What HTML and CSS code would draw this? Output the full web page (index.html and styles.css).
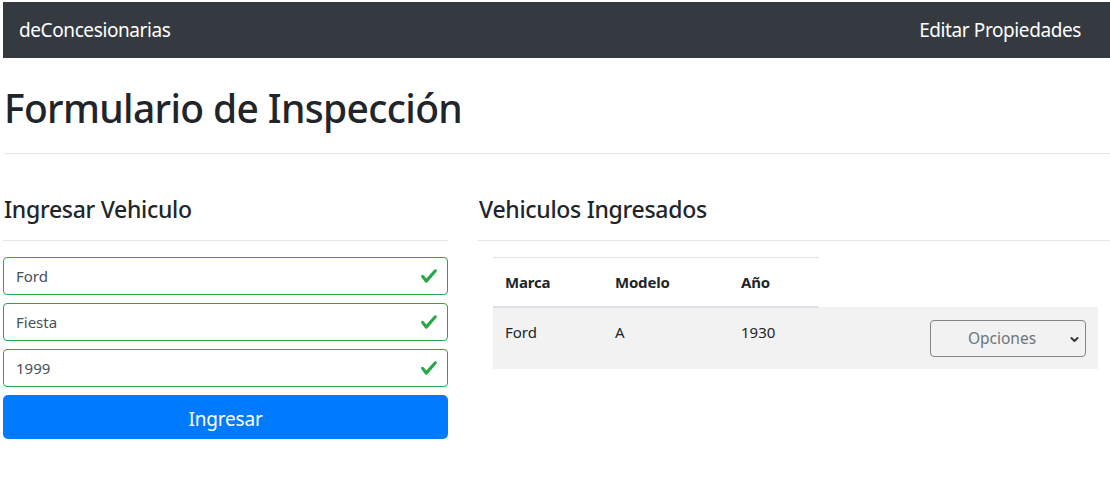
FILE: index.html
```html
<!DOCTYPE html>
<html lang="es">
<head>
<meta charset="utf-8">
<title>Formulario de Inspección</title>
<link rel="stylesheet" href="styles.css">
</head>
<body>
<div class="page">
  <nav class="navbar">
    <a class="brand" href="#">deConcesionarias</a>
    <a class="nav-link" href="#">Editar Propiedades</a>
  </nav>
  <main class="content">
    <h1 class="title">Formulario de Inspección</h1>
    <hr class="rule">
    <div class="columns">
      <section class="col-left">
        <h4 class="section-title">Ingresar Vehiculo</h4>
        <hr class="rule rule-section">
        <form class="form">
          <div class="field">
            <input class="input" type="text" value="Ford">
            <svg class="check" viewBox="0 0 8 8"><path fill="#28a745" d="M2.3 6.73L.6 4.53c-.4-1.04.46-1.4 1.1-.8l1.1 1.4 3.4-3.8c.6-.63 1.6-.27 1.2.7l-4 4.6c-.43.5-.8.4-1.1.1z"/></svg>
          </div>
          <div class="field">
            <input class="input" type="text" value="Fiesta">
            <svg class="check" viewBox="0 0 8 8"><path fill="#28a745" d="M2.3 6.73L.6 4.53c-.4-1.04.46-1.4 1.1-.8l1.1 1.4 3.4-3.8c.6-.63 1.6-.27 1.2.7l-4 4.6c-.43.5-.8.4-1.1.1z"/></svg>
          </div>
          <div class="field">
            <input class="input" type="text" value="1999">
            <svg class="check" viewBox="0 0 8 8"><path fill="#28a745" d="M2.3 6.73L.6 4.53c-.4-1.04.46-1.4 1.1-.8l1.1 1.4 3.4-3.8c.6-.63 1.6-.27 1.2.7l-4 4.6c-.43.5-.8.4-1.1.1z"/></svg>
          </div>
          <button class="btn" type="button">Ingresar</button>
        </form>
      </section>
      <section class="col-right">
        <h4 class="section-title">Vehiculos Ingresados</h4>
        <hr class="rule rule-section">
        <table class="table">
          <thead>
            <tr>
              <th class="c1">Marca</th>
              <th class="c2">Modelo</th>
              <th class="c3">Año</th>
            </tr>
          </thead>
          <tbody>
            <tr class="striped">
              <td>Ford</td>
              <td>A</td>
              <td>1930</td>
              <td class="c4">
                <div class="select">
                  <span>Opciones</span>
                  <svg class="chev" viewBox="0 0 4 5"><path fill="none" stroke="#343a40" stroke-width="0.9" stroke-linecap="round" stroke-linejoin="round" d="M0.6 1.8L2 3.2 3.4 1.8"/></svg>
                </div>
              </td>
            </tr>
          </tbody>
        </table>
      </section>
    </div>
  </main>
</div>
</body>
</html>
```

FILE: styles.css
```css
* { box-sizing: border-box; }

body {
  margin: 0;
  background: #fff;
  font-family: "Noto Sans", "Open Sans", sans-serif;
  color: #212529;
  font-size: 16px;
  line-height: 1.5;
}

.page {
  padding: 2px 0 0 3px;
}

.navbar {
  height: 56px;
  background: #343a40;
  display: flex;
  align-items: center;
  justify-content: space-between;
  padding: 1px 29px 0 16px;
}

.navbar a {
  color: #fff;
  text-decoration: none;
  font-size: 19px;
  letter-spacing: -0.4px;
}

.content {
  padding: 0 0 0 1px;
}

.title {
  margin: 26px 0 0;
  font-size: 39px;
  font-weight: 500;
  line-height: 48px;
  letter-spacing: -0.65px;
}

.rule {
  border: 0;
  border-top: 1px solid #e5e5e5;
  margin: 21px 0 0;
}

.columns {
  display: grid;
  grid-template-columns: 445px 1fr;
  column-gap: 30px;
  margin-left: -1px;
}

.section-title {
  margin: 41px 0 0 1px;
  font-size: 23px;
  font-weight: 500;
  line-height: 28px;
  letter-spacing: -0.3px;
}

.rule-section {
  margin-top: 17px;
}

.form {
  margin-top: 16px;
  display: flex;
  flex-direction: column;
  gap: 8px;
}

.field {
  position: relative;
}

.input {
  display: block;
  width: 100%;
  height: 38px;
  padding: 6px 36px 6px 12px;
  border: 1px solid #28a745;
  border-radius: 4px;
  font-family: inherit;
  font-size: 15px;
  color: #495057;
  background: #fff;
  outline: none;
}

.check {
  position: absolute;
  right: 10px;
  top: 10px;
  width: 18px;
  height: 18px;
}

.btn {
  height: 44px;
  padding: 4px 0 0;
  border: 0;
  border-radius: 5px;
  background: #007bff;
  color: #fff;
  font-family: inherit;
  font-size: 19px;
  letter-spacing: -0.2px;
}

.table {
  margin: 16px 0 0 15px;
  border-collapse: collapse;
  width: 605px;
}

.table th {
  text-align: left;
  font-size: 15px;
  font-weight: 700;
  padding: 12px 12px;
  border-top: 1px solid #dee2e6;
  border-bottom: 2px solid #dee2e6;
  height: 49px;
  letter-spacing: -0.2px;
}

.c1 { width: 110px; }
.c2 { width: 126px; }
.c3 { width: 90px; }

.table td {
  vertical-align: top;
  padding: 12px 12px;
  font-size: 15px;
  line-height: 24px;
}

.striped {
  background: #f2f2f2;
}

.table td.c4 {
  padding: 13px 12px 12px 12px;
}

.select {
  margin-left: auto;
  width: 156px;
  height: 37px;
  padding-right: 12px;
  border: 1px solid #80868b;
  border-radius: 4px;
  display: flex;
  align-items: center;
  justify-content: center;
  position: relative;
  color: #6c757d;
  font-size: 15.5px;
  background: #f2f2f2;
}

.chev {
  position: absolute;
  right: 6px;
  top: 13px;
  width: 9px;
  height: 11px;
}
```
